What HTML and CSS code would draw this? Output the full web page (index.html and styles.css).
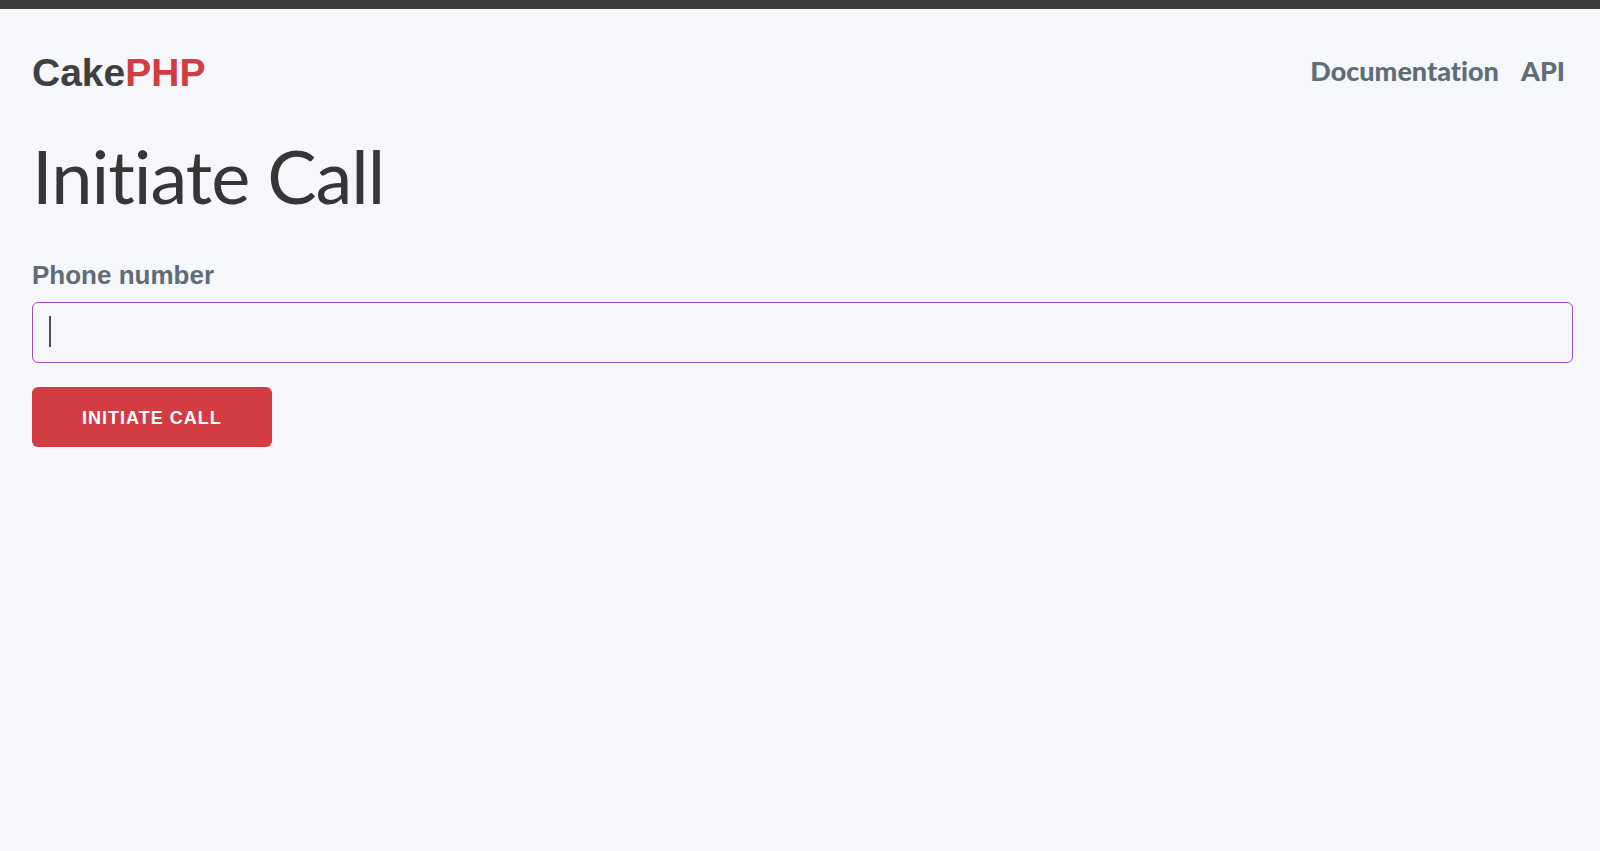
FILE: index.html
```html
<!DOCTYPE html>
<html lang="en">
<head>
  <meta charset="UTF-8">
  <meta name="viewport" content="width=device-width, initial-scale=1.0">
  <title>Initiate Call</title>
  <link rel="stylesheet" href="styles.css">
</head>
<body>
  <nav class="top-nav">
    <a class="top-nav-title" href="/">Cake<span>PHP</span></a>
    <div class="top-nav-links">
      <a href="/docs">Documentation</a>
      <a href="/api">API</a>
    </div>
  </nav>
  <main class="main">
    <h1>Initiate Call</h1>
    <form onsubmit="return false">
      <label for="phone-number">Phone number</label>
      <div class="field">
        <input type="text" id="phone-number" name="phone_number">
        <span class="caret"></span>
      </div>
      <button type="submit">Initiate Call</button>
    </form>
  </main>
</body>
</html>
```
FILE: styles.css
```css
* {
  box-sizing: border-box;
}
body {
  margin: 0;
  border-top: 9px solid #3d3d3d;
  background-color: #f5f7fa;
  color: #363637;
  font-family: "Liberation Sans", Arial, sans-serif;
}
.top-nav {
  display: flex;
  align-items: flex-start;
  justify-content: space-between;
  padding: 40px 35px 0 32px;
}
.top-nav a {
  color: #606c76;
  text-decoration: none;
}
.top-nav .top-nav-title {
  color: #404041;
  font-size: 39px;
  font-weight: bold;
  line-height: 48px;
}
.top-nav-title span {
  color: #d33c43;
}
.top-nav-links {
  display: flex;
  gap: 22px;
  font-family: Lato, sans-serif;
  font-size: 27px;
  font-variant-ligatures: none;
  font-weight: 900;
  line-height: 44px;
}
.main {
  padding: 35px 27px 32px 32px;
}
h1 {
  margin: 0 0 35px;
  font-family: Lato, sans-serif;
  font-size: 74px;
  font-weight: normal;
  letter-spacing: -1px;
  line-height: 88px;
}
label {
  display: block;
  margin-bottom: 7px;
  color: #606c76;
  font-size: 26px;
  font-weight: bold;
  line-height: 40px;
}
.field {
  position: relative;
  margin-bottom: 24px;
}
input {
  display: block;
  width: 100%;
  height: 61px;
  padding: 8px 16px;
  border: 1px solid #9b4dca;
  border-radius: 6px;
  outline: 0;
  background: transparent;
  color: #363637;
  font-family: inherit;
  font-size: 26px;
}
.caret {
  position: absolute;
  top: 14px;
  left: 17px;
  width: 2px;
  height: 31px;
  background-color: #4b4c4f;
}
button {
  display: block;
  height: 60px;
  padding: 3px 50px 0;
  border: 0;
  border-radius: 6px;
  background-color: #d33c43;
  color: #fff;
  cursor: pointer;
  font-family: inherit;
  font-size: 18px;
  font-weight: bold;
  letter-spacing: 1px;
  text-transform: uppercase;
}
button:hover {
  background-color: #606c76;
}
```
